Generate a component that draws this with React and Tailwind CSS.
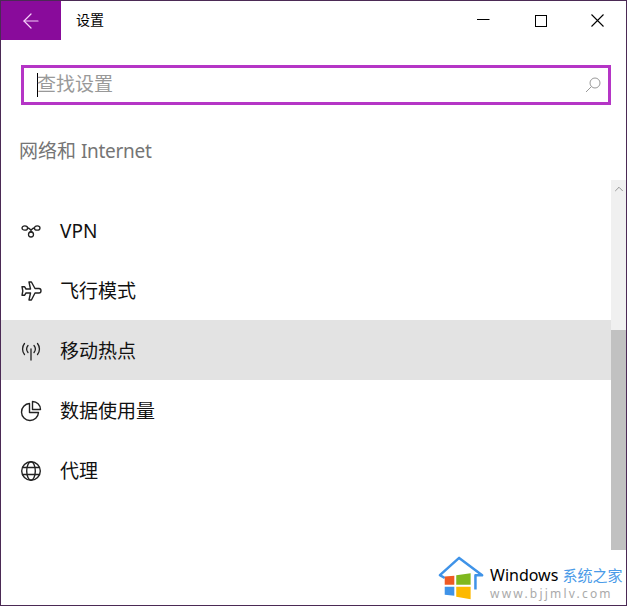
import { ArrowLeft, ChevronUp } from 'lucide-react';

const FONT = "font-['Noto_Sans','Noto_Sans_CJK_SC',sans-serif]";

const VpnIcon = () => (
    <svg width="20" height="20" viewBox="0 0 20 20" fill="none" stroke="#222" strokeWidth="1.300">
        <ellipse cx="3.800" cy="7" rx="2.800" ry="2.200" />
        <ellipse cx="16.200" cy="7" rx="2.800" ry="2.200" />
        <circle cx="10" cy="13.500" r="2.500" />
        <path d="M6.500 7c2 0 3.300 1.600 4.800 4.500M13.500 7c-2 0-3.300 1.600-4.800 4.500" />
    </svg>
);

const PlaneIcon = () => (
    <svg width="22" height="22" viewBox="0 0 22 22" fill="none" stroke="#222" strokeWidth="1.400" strokeLinejoin="round">
        <path d="M9 2h2.400l3.600 6.500h4c1.200 0 2 1.100 2 2.300s-.8 2.200-2 2.200h-4L11.400 20H9l1.500-7H6l-1.500 2.300H2l.8-4.300L2 6.700h2.500L6 9h4.500Z" />
    </svg>
);

const HotspotIcon = () => (
    <svg width="20" height="22" viewBox="0 0 20 22" fill="none" stroke="#222" strokeWidth="1.300" strokeLinecap="round">
        <path d="M10 9v11" />
        <path d="M7 5.500c-1.600 2-1.600 5 0 7M13 5.500c1.600 2 1.600 5 0 7" />
        <path d="M3.500 3.500c-2.600 3.200-2.600 8 0 11M16.500 3.500c2.600 3.200 2.600 8 0 11" />
    </svg>
);

const PieIcon = () => (
    <svg width="22" height="22" viewBox="0 0 22 22" fill="none" stroke="#222" strokeWidth="1.400" strokeLinejoin="round">
        <path d="M9.500 3.500a8.500 8.500 0 1 0 9 9h-9Z" />
        <path d="M12.500 1.500a8 8 0 0 1 8 8h-8Z" />
    </svg>
);

const GlobeIcon = () => (
    <svg width="22" height="22" viewBox="0 0 22 22" fill="none" stroke="#222" strokeWidth="1.400">
        <circle cx="11" cy="11" r="9.300" />
        <ellipse cx="11" cy="11" rx="4.300" ry="9.300" />
        <path d="M2.400 7.500h17.200M2.400 14.500h17.200" />
    </svg>
);

const items = [
    { label: 'VPN', icon: <VpnIcon /> },
    { label: '飞行模式', icon: <PlaneIcon /> },
    { label: '移动热点', icon: <HotspotIcon />, active: true },
    { label: '数据使用量', icon: <PieIcon /> },
    { label: '代理', icon: <GlobeIcon /> },
];

const WindowsLogo = () => (
    <svg width="48" height="48" viewBox="0 0 50 48" fill="none" className="shrink-0 -ml-[9px]">
        <path d="M7 23 L2 20 L22 2 L46 20 L39 20 L39 35" stroke="#3f93e8" strokeWidth="2.600" strokeLinejoin="round" />
        <path d="M7 21.500l10-1V30H7Z" fill="#ee5a24" />
        <path d="M19 20l15-2v12H19Z" fill="#7fb81e" />
        <path d="M7 32h10v9.500l-10-1Z" fill="#3f93e8" />
        <path d="M19 32h15v13l-15-2.500Z" fill="#fdb900" />
    </svg>
);

const App = () => {
    return (
        <div className={`${FONT} relative w-[627px] h-[606px] bg-white overflow-hidden border border-[#4b2a55]`}>
            <div className="flex items-start h-[39px]">
                <div className="w-[60px] h-[39px] bg-[#890b9b] flex items-center justify-center">
                    <ArrowLeft size={24} strokeWidth={1.200} absoluteStrokeWidth className="text-[#f6d2fa]" />
                </div>
                <span className="ml-[15px] mt-[9px] text-[14px] leading-5 text-black">设置</span>
                <div className="ml-auto flex items-center h-[39px]">
                    <span className="w-[57px] flex justify-center">
                        <svg width="13" height="13" viewBox="0 0 13 13" stroke="#000" className="-mt-[2px]">
                            <path d="M0 6.500h12.500" />
                        </svg>
                    </span>
                    <span className="w-[57px] flex justify-center">
                        <span className="w-[12px] h-[12px] border border-black" />
                    </span>
                    <span className="w-[57px] flex justify-center">
                        <svg width="13" height="13" viewBox="0 0 13 13" stroke="#000" strokeWidth="1.100">
                            <path d="M.5.500l12 12M12.500.500l-12 12" />
                        </svg>
                    </span>
                </div>
            </div>

            <div className="ml-[20px] mt-[25px] w-[590px] h-[40px] border-[3px] border-[#b535c6] flex items-center pl-[13px] pr-[7px]">
                <span className="w-px h-[24px] bg-black" />
                <span className="text-[19px] text-[#999] leading-6 -mt-[2px] -ml-px">查找设置</span>
                <svg width="16" height="16" viewBox="0 0 16 16" fill="none" stroke="#999" className="ml-auto">
                    <circle cx="10" cy="6" r="5" />
                    <path d="M6.500 9.500L1 15" />
                </svg>
            </div>

            <h1 className="ml-[18px] mt-[32px] text-[19px] leading-7 font-normal text-[#757575]">
                网络和 <span className="tracking-[-0.300px]">Internet</span>
            </h1>

            <div className="mt-[15px] flex">
                <div className="w-[610px] pt-[20px]">
                    {items.map((item) => (
                        <div
                            key={item.label}
                            className={`h-[60px] flex items-center pl-[19px] pt-[2px] ${item.active ? 'bg-[#e3e3e3]' : ''}`}
                        >
                            <span className="w-[22px] flex justify-center">{item.icon}</span>
                            <span className="ml-[18px] text-[19px] text-[#111]">{item.label}</span>
                        </div>
                    ))}
                </div>
                <div className="w-[15px] h-[370px] bg-[#f0f0f0] flex flex-col">
                    <ChevronUp size={14} strokeWidth={1} className="mt-[2px] text-[#555] self-center" />
                    <div className="mt-[134px] h-[220px] bg-[#c1c1c1]" />
                </div>
            </div>

            <div className="absolute right-[-1px] bottom-[-1px] w-[180px] h-[51px] bg-white flex items-start">
                <WindowsLogo />
                <div className="ml-[4px] mt-[10px]">
                    <div className="text-[16px] leading-[21px] text-black whitespace-nowrap">
                        Windows <span className="text-[15px] text-[#4a9be8]">系统之家</span>
                    </div>
                    <div className="text-[12px] leading-[16px] tracking-[2.200px] text-[#aaa]">www.bjjmlv.com</div>
                </div>
            </div>
        </div>
    );
};

export default App;
